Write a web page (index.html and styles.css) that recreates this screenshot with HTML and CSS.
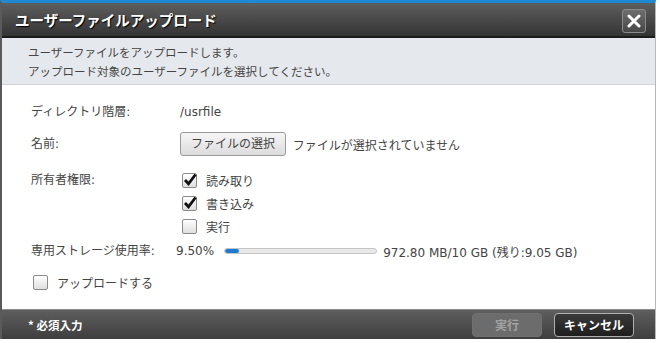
FILE: index.html
```html
<!DOCTYPE html>
<html lang="ja">
<head>
<meta charset="UTF-8">
<title>ユーザーファイルアップロード</title>
<link rel="stylesheet" href="styles.css">
</head>
<body>
<div class="dialog">
    <div class="titlebar">
        <h1>ユーザーファイルアップロード</h1>
        <button class="close" type="button">
            <svg width="14" height="14" viewBox="0 0 14 14"><path d="M2 2 L12 12 M12 2 L2 12" stroke="#fff" stroke-width="3" stroke-linecap="round"/></svg>
        </button>
    </div>

    <div class="intro">
        <p>ユーザーファイルをアップロードします。</p>
        <p>アップロード対象のユーザーファイルを選択してください。</p>
    </div>

    <div class="form">
        <div class="row row-dir">
            <span class="label">ディレクトリ階層:</span>
            <span class="value">/usrfile</span>
        </div>
        <div class="row row-name">
            <span class="label">名前:</span>
            <span class="value">
                <span class="file-btn">ファイルの選択</span>
                <span class="file-note">ファイルが選択されていません</span>
            </span>
        </div>
        <div class="row row-perm">
            <span class="label">所有者権限:</span>
            <div class="checks">
                <label class="check"><span class="box checked"><svg width="16" height="16" viewBox="0 0 16 16"><path d="M3 8 L6.5 11.8 L13.5 2.5" fill="none" stroke="#111" stroke-width="2.8"/></svg></span>読み取り</label>
                <label class="check"><span class="box checked"><svg width="16" height="16" viewBox="0 0 16 16"><path d="M3 8 L6.5 11.8 L13.5 2.5" fill="none" stroke="#111" stroke-width="2.8"/></svg></span>書き込み</label>
                <label class="check"><span class="box"></span>実行</label>
            </div>
        </div>
        <div class="row row-storage">
            <span class="label">専用ストレージ使用率:</span>
            <span class="value storage">
                9.50%
                <span class="bar"><span class="fill" style="width: 9.5%"></span></span>
                972.80 MB/10 GB (残り:9.05 GB)
            </span>
        </div>
        <div class="row row-upload">
            <label class="check"><span class="box"></span>アップロードする</label>
        </div>
    </div>

    <div class="footer">
        <span class="required">* 必須入力</span>
        <div class="actions">
            <button class="btn disabled" type="button">実行</button>
            <button class="btn cancel" type="button">キャンセル</button>
        </div>
    </div>
</div>
</body>
</html>
```
FILE: styles.css
```css
body {
    margin: 0;
    background-color: #fff;
    font-family: "DejaVu Sans", "Noto Sans CJK JP", sans-serif;
    font-size: 12px;
    color: #444;
}

.dialog {
    width: 656px;
    height: 339px;
    box-sizing: border-box;
    border-top: 3px solid #1f8ad4;
    border-left: 2px solid #5a5a5a;
    border-right: 1px solid #b8b8b8;
    display: flex;
    flex-direction: column;
}

.titlebar {
    height: 33px;
    flex-shrink: 0;
    background: linear-gradient(#5e5e5e, #343434);
    border-bottom: 2px solid #1c1c1c;
    display: flex;
    align-items: center;
    justify-content: space-between;
    padding: 0 9px 0 13px;
}

.titlebar h1 {
    margin: 0;
    font-family: "Noto Sans CJK JP", sans-serif;
    font-size: 14.5px;
    font-weight: 700;
    color: #fff;
    text-shadow: 1px 1px 1px #000;
}

.close {
    width: 24px;
    height: 24px;
    padding: 0;
    margin-top: 2px;
    border: 1px solid #8c8c8c;
    border-radius: 3px;
    background: linear-gradient(#6e6e6e, #474747);
    display: flex;
    align-items: center;
    justify-content: center;
}

.intro {
    height: 47px;
    flex-shrink: 0;
    box-sizing: border-box;
    background-color: #e5e8ec;
    border-bottom: 1px solid #cfd2d6;
    padding: 5px 0 0 26px;
}

.intro p {
    margin: 0;
    line-height: 18.5px;
    font-family: "Noto Sans CJK JP", sans-serif;
    font-size: 11.5px;
    color: #454545;
}

.form {
    flex: 1;
    padding: 17px 0 0 29px;
}

.row {
    display: flex;
    align-items: center;
}

.label {
    width: 149px;
    flex-shrink: 0;
    line-height: 20px;
}

.row-dir {
    height: 20px;
}

.row-name {
    margin-top: 10px;
    height: 24px;
}

.row-perm {
    margin-top: 14px;
    align-items: flex-start;
}

.row-storage {
    margin-top: 5px;
    height: 20px;
}

.row-upload {
    margin-top: 11px;
    height: 20px;
    padding-left: 2px;
}

.file-btn {
    display: inline-block;
    height: 22px;
    line-height: 22px;
    padding: 0 10px;
    border: 1px solid #9a9a9a;
    border-radius: 3px;
    background: linear-gradient(#f6f6f6, #dcdcdc);
    color: #444;
    vertical-align: middle;
}

.file-note {
    margin-left: 3px;
    vertical-align: middle;
}

.checks {
    display: flex;
    flex-direction: column;
    gap: 3px;
    padding-left: 2px;
}

.check {
    display: flex;
    align-items: center;
    height: 20px;
    gap: 9px;
}

.box {
    width: 13px;
    height: 13px;
    border: 1px solid #8a8a8a;
    border-radius: 2px;
    background: linear-gradient(#ffffff, #dedede);
    position: relative;
}

.box svg {
    position: absolute;
    left: -1px;
    top: -2px;
}

.storage {
    display: flex;
    align-items: center;
    margin-left: -4px;
}

.bar {
    width: 151px;
    height: 4px;
    margin: 0 6px 0 10px;
    border: 1px solid #c4c4c4;
    border-radius: 3px;
    background-color: #e8e8e8;
    overflow: hidden;
}

.fill {
    display: block;
    height: 100%;
    background-color: #1c7ad0;
    border-radius: 3px;
}

.footer {
    height: 30px;
    flex-shrink: 0;
    box-sizing: border-box;
    background: linear-gradient(#5e5e5e, #3e3e3e);
    border-top: 1px solid #8a8a8a;
    display: flex;
    align-items: center;
    justify-content: space-between;
    padding: 0 21px 0 26px;
}

.required {
    font-family: "Noto Sans CJK JP", sans-serif;
    font-size: 11.5px;
    font-weight: 700;
    color: #fff;
}

.actions {
    display: flex;
    gap: 12px;
}

.btn {
    height: 24px;
    border-radius: 4px;
    font-family: "Noto Sans CJK JP", sans-serif;
    font-size: 12px;
    font-weight: 700;
    padding: 0;
}

.btn.disabled {
    width: 70px;
    border: 1px solid #707070;
    background-color: #6c6c6c;
    color: #a2a2a2;
}

.btn.cancel {
    width: 80px;
    border: 1px solid #b0b0b0;
    background: linear-gradient(#3a3a3a, #1e1e1e);
    color: #fff;
}
```
